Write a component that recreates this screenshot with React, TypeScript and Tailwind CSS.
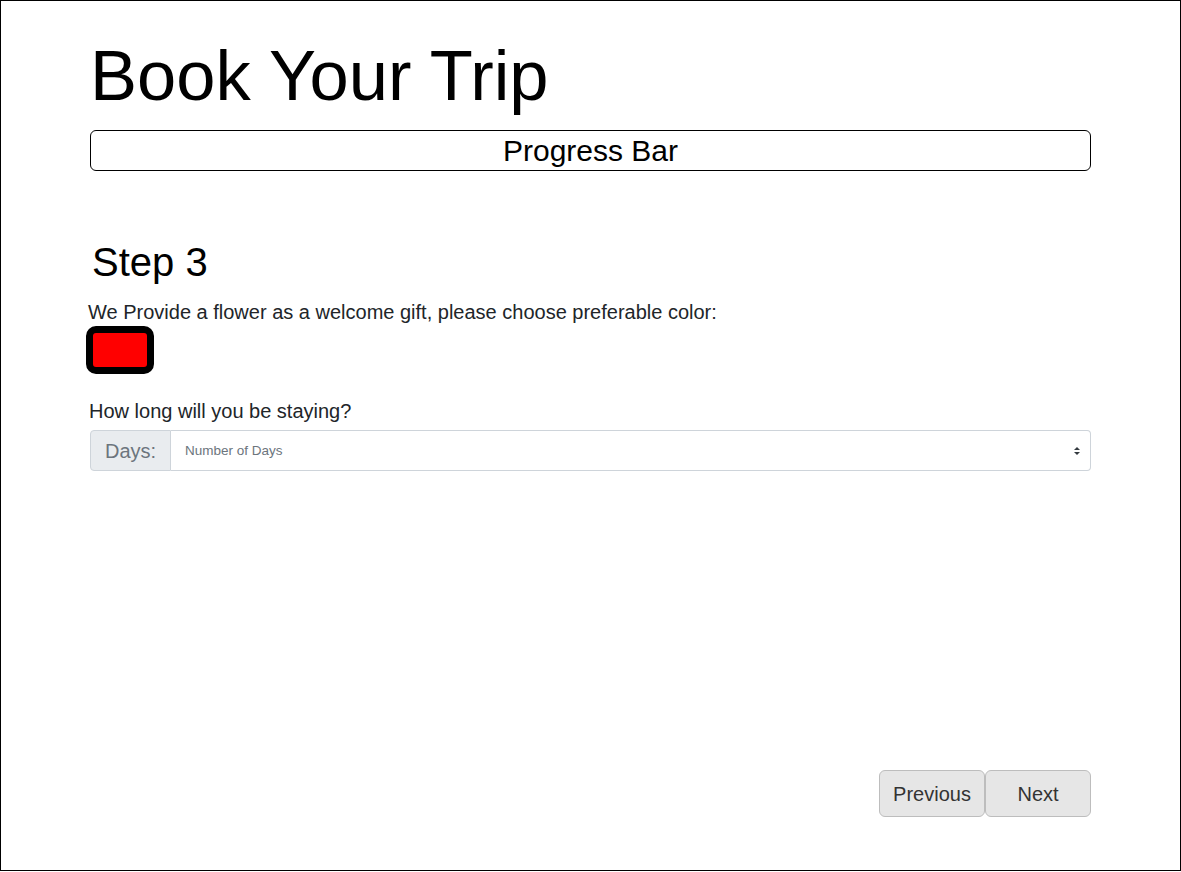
import React from "react";

export default function App() {
  return (
    <div
      className="w-[1181px] h-[871px] border border-black bg-white text-black flex flex-col px-[89px] pt-[33px]"
      style={{ fontFamily: '"Liberation Sans", Arial, sans-serif' }}
    >
      <h1 className="text-[70.5px] leading-[84px] font-normal m-0">Book Your Trip</h1>
      <div className="mt-[12px] h-[41px] border border-black rounded-[6px] flex items-center justify-center text-[30px] leading-none pt-[1px]">
        Progress Bar
      </div>

      <h2 className="mt-[67px] ml-[2px] text-[40px] leading-[48px] font-normal">Step 3</h2>
      <p className="mt-[14px] -ml-[2px] text-[20px] leading-[24px] text-[#212529]">
        We Provide a flower as a welcome gift, please choose preferable color:
      </p>
      <div className="mt-[2px] -ml-[4px]">
        <button className="block w-[68px] h-[48px] border-[7px] border-black rounded-[10px] bg-[#ff0000]" aria-label="Red"></button>
      </div>

      <label className="mt-[25px] -ml-[1px] text-[20px] leading-[24px] text-[#212529]">How long will you be staying?</label>
      <div className="mt-[7px] flex h-[41px] w-full">
        <div className="w-[81px] flex items-center justify-center bg-[#e9ecef] border border-[#ced4da] rounded-l-[4px] text-[20px] text-[#6c757d]">
          Days:
        </div>
        <div className="relative flex-1">
          <select
            className="appearance-none w-full h-full border border-l-0 border-[#ced4da] rounded-r-[4px] bg-white pl-[14px] pt-[1px] text-[13.5px] text-[#6c757d] outline-none"
            defaultValue=""
            style={{ fontFamily: '"Liberation Sans", Arial, sans-serif' }}
          >
            <option value="">Number of Days</option>
          </select>
          <svg className="pointer-events-none absolute right-[10px] top-1/2 -translate-y-1/2" width="8" height="10" viewBox="0 0 8 10">
            <path d="M4 1 L7 4 L1 4 Z" fill="#343a40" />
            <path d="M1 6 L7 6 L4 9 Z" fill="#343a40" />
          </svg>
        </div>
      </div>

      <div className="flex-1"></div>
      <div className="flex justify-end pb-[53px]">
        <button className="w-[106px] h-[47px] bg-[#e6e6e6] border border-[#bdbdbd] rounded-[6px] text-[20px] text-[#333333]">
          Previous
        </button>
        <button className="w-[106px] h-[47px] bg-[#e6e6e6] border border-[#bdbdbd] rounded-[6px] text-[20px] text-[#333333]">
          Next
        </button>
      </div>
    </div>
  );
}
